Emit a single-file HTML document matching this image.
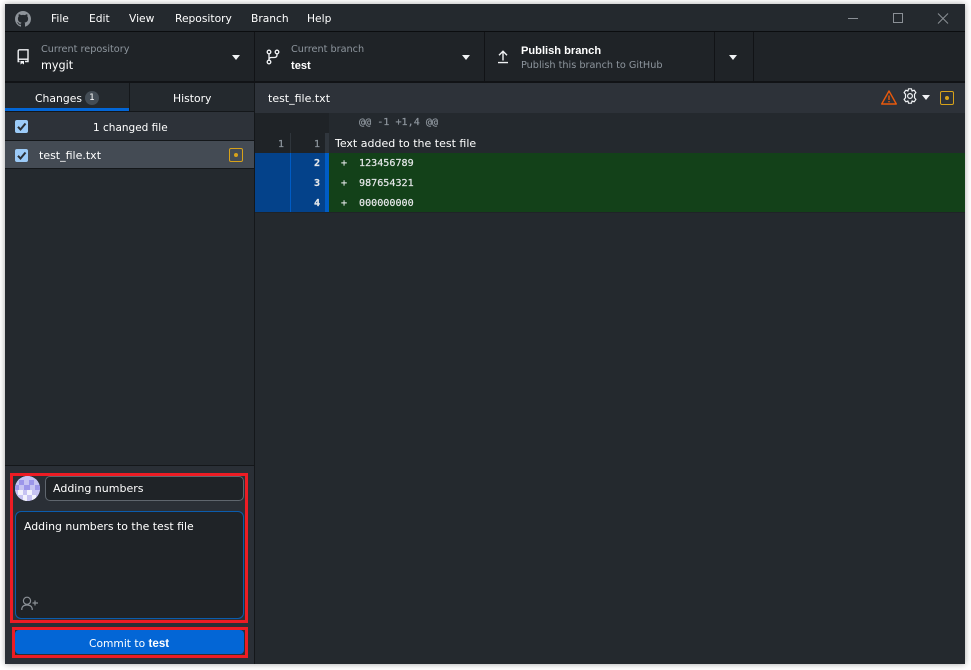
<!DOCTYPE html>
<html><head><meta charset="utf-8"><style>
html,body{margin:0;padding:0;width:971px;height:670px;overflow:hidden;background:#fff}
*{box-sizing:border-box}
#s{position:absolute;left:5px;top:4px;width:960px;height:660px;box-shadow:0 0 6px rgba(0,0,0,.35)}
.b{position:absolute}
.t{position:absolute;white-space:nowrap;font:11px/18px "DejaVu Sans","Liberation Sans",sans-serif;color:#fff}
.n{font-size:10.7px}
.s{font-size:9.7px;color:#8e969e}
.k{font:bold 11.1px/18px "Liberation Sans",sans-serif;color:#fff}
.m{font:10.1px/14px "DejaVu Sans Mono","Liberation Mono",monospace;color:#e6e8ea;-webkit-text-stroke:.2px currentColor}
svg{position:absolute;overflow:visible}
.tri{position:absolute;width:0;height:0;border-left:4.5px solid transparent;border-right:4.5px solid transparent;border-top:5px solid #f0f2f4}
.cb{position:absolute;width:13px;height:13px;background:#9ccbf8;border-radius:2px}
</style></head><body>
<div id="s"></div>
<div class="b" style="left:5px;top:4px;width:960px;height:660px;background:#24292e"></div>
<!-- title bar -->
<div class="b" style="left:5px;top:31px;width:960px;height:1px;background:#0b0d0f"></div>
<svg style="left:15px;top:11px" width="16" height="16" viewBox="0 0 16 16"><path fill="#8d9399" d="M8 0C3.58 0 0 3.58 0 8c0 3.54 2.29 6.53 5.47 7.59.4.07.55-.17.55-.38 0-.19-.01-.82-.01-1.49-2.01.37-2.53-.49-2.69-.94-.09-.23-.48-.94-.82-1.13-.28-.15-.68-.52-.01-.53.63-.01 1.08.58 1.23.82.72 1.21 1.87.87 2.33.66.07-.52.28-.87.51-1.07-1.78-.2-3.64-.89-3.64-3.95 0-.87.31-1.59.82-2.15-.08-.2-.36-1.02.08-2.12 0 0 .67-.21 2.2.82.64-.18 1.32-.27 2-.27.68 0 1.36.09 2 .27 1.53-1.04 2.2-.82 2.2-.82.44 1.1.16 1.92.08 2.12.51.56.82 1.27.82 2.15 0 3.07-1.87 3.75-3.65 3.95.29.25.54.73.54 1.48 0 1.07-.01 1.93-.01 2.2 0 .21.15.46.55.38A8.013 8.013 0 0016 8c0-4.42-3.58-8-8-8z"/></svg>
<span class="t n" style="left:51px;top:10px">File</span>
<span class="t n" style="left:89px;top:10px">Edit</span>
<span class="t n" style="left:129px;top:10px">View</span>
<span class="t n" style="left:175px;top:10px">Repository</span>
<span class="t n" style="left:251px;top:10px">Branch</span>
<span class="t n" style="left:307px;top:10px">Help</span>
<svg style="left:848px;top:13px" width="100" height="12" fill="none" stroke="#8b9096"><path d="M0 5.5H10M45.5 .5H54.5V9.5H45.5ZM90 .5L100 10.5M100 .5L90 10.5"/></svg>
<!-- toolbar -->
<div class="b" style="left:5px;top:32px;width:960px;height:49px;background:#1f2327"></div>
<div class="b" style="left:5px;top:81px;width:960px;height:2px;background:#111316"></div>
<div class="b" style="left:254px;top:32px;width:1px;height:49px;background:#111316"></div>
<div class="b" style="left:484px;top:32px;width:1px;height:49px;background:#111316"></div>
<div class="b" style="left:714px;top:32px;width:1px;height:49px;background:#111316"></div>
<div class="b" style="left:753px;top:32px;width:1px;height:49px;background:#111316"></div>
<svg style="left:17px;top:49px" width="12" height="16" fill="none" stroke="#f0f2f4" stroke-width="1.4"><path d="M2.5 12.5H1.2V2.2Q1.2 .8 2.6 .8H11V12.5H8"/><path d="M1.2 10.2H11"/><path d="M3.5 12V15.5L5.2 14.2L7 15.5V12Z" fill="#f0f2f4" stroke="none"/></svg>
<span class="t s" style="left:41px;top:41px">Current repository</span>
<span class="t" style="left:41px;top:57px;font-size:11.2px">mygit</span>
<div class="tri" style="left:232px;top:55px"></div>
<svg style="left:266px;top:49px" width="13" height="16" fill="none" stroke="#f0f2f4" stroke-width="1.3"><circle cx="3" cy="3" r="1.8"/><circle cx="3" cy="13" r="1.8"/><circle cx="11" cy="3" r="1.8"/><path d="M3 5V11M11 5V6Q11 8.5 8 8.5H5.5Q3 8.5 3 10.5"/></svg>
<span class="t s" style="left:291px;top:41px">Current branch</span>
<span class="t k" style="left:291px;top:57px">test</span>
<div class="tri" style="left:462px;top:55px"></div>
<svg style="left:497px;top:50px" width="12" height="14" fill="none" stroke="#f0f2f4" stroke-width="1.4"><path d="M6 10.5V1.5M2 5.2L6 1.2L10 5.2M1 12.6H11"/></svg>
<span class="t k" style="left:521px;top:42px">Publish branch</span>
<span class="t s" style="left:521px;top:57px">Publish this branch to GitHub</span>
<div class="tri" style="left:729px;top:55px"></div>
<!-- tabs -->
<div class="b" style="left:5px;top:83px;width:249px;height:24px;background:#24292e"></div>
<div class="b" style="left:5px;top:108px;width:124px;height:3px;background:#0366d6"></div>
<div class="b" style="left:129px;top:83px;width:1px;height:28px;background:#14171a"></div>
<div class="b" style="left:5px;top:111px;width:249px;height:1px;background:#14171a"></div>
<span class="t" style="left:35px;top:90px;font-size:10.8px">Changes</span>
<div class="b" style="left:85px;top:91px;width:14px;height:14px;border-radius:7px;background:#444d56;color:#fff;font:9px/14px 'DejaVu Sans',sans-serif;text-align:center">1</div>
<span class="t" style="left:173px;top:90px;font-size:10.8px">History</span>
<!-- sidebar -->
<div class="b" style="left:5px;top:112px;width:249px;height:28px;background:#2d3239"></div>
<div class="b" style="left:5px;top:140px;width:249px;height:1px;background:#14171a"></div>
<div class="b" style="left:5px;top:141px;width:249px;height:27px;background:#444b54"></div>
<div class="b" style="left:5px;top:168px;width:249px;height:1px;background:#14171a"></div>
<div class="cb" style="left:15px;top:120px"></div>
<svg style="left:15px;top:120px" width="13" height="13" fill="none" stroke="#2a2f35" stroke-width="2"><path d="M3 6.8L5.5 9.5L10.5 3.5"/></svg>
<span class="t" style="left:93px;top:119px;font-size:10.5px">1 changed file</span>
<div class="cb" style="left:15px;top:149px"></div>
<svg style="left:15px;top:149px" width="13" height="13" fill="none" stroke="#2a2f35" stroke-width="2"><path d="M3 6.8L5.5 9.5L10.5 3.5"/></svg>
<span class="t" style="left:39px;top:147px">test_file.txt</span>
<div class="b" style="left:229px;top:148px;width:14px;height:14px;border:1.6px solid #d7a21a;border-radius:2px"></div>
<div class="b" style="left:234px;top:153px;width:4px;height:4px;border-radius:2px;background:#d7a21a"></div>
<div class="b" style="left:254px;top:83px;width:1px;height:581px;background:#14171a"></div>
<!-- diff header -->
<div class="b" style="left:255px;top:83px;width:710px;height:30px;background:#2d3239"></div>
<span class="t" style="left:268px;top:90px">test_file.txt</span>
<svg style="left:881px;top:90px" width="16" height="15" fill="none" stroke="#e8590c" stroke-width="1.4"><path d="M8 1L15.3 14H.7Z" stroke-linejoin="round"/><path d="M8 5.5V10M8 11V12.4"/></svg>
<svg style="left:902px;top:88px" width="16" height="16" fill="none" stroke="#f0f2f4" stroke-width="1.2"><path d="M6.5 .8H9.5L10 3L12.2 2.2L13.9 4.6L12.5 6.3L12.5 9.7L13.9 11.4L12.2 13.8L10 13L9.5 15.2H6.5L6 13L3.8 13.8L2.1 11.4L3.5 9.7L3.5 6.3L2.1 4.6L3.8 2.2L6 3Z" stroke-linejoin="round"/><circle cx="8" cy="8" r="2.4"/></svg>
<div class="tri" style="left:922px;top:95px"></div>
<div class="b" style="left:940px;top:91px;width:14px;height:14px;border:1.6px solid #d7a21a;border-radius:2px"></div>
<div class="b" style="left:945px;top:96px;width:4px;height:4px;border-radius:2px;background:#d7a21a"></div>
<!-- diff body -->
<div class="b" style="left:255px;top:113px;width:710px;height:20px;background:#24292e"></div>
<div class="b" style="left:255px;top:113px;width:74px;height:20px;background:#1f2327"></div>
<span class="t m" style="left:359px;top:116px;color:#8e969e">@@ -1 +1,4 @@</span>
<div class="b" style="left:255px;top:133px;width:74px;height:20px;background:#1f2327"></div>
<div class="b" style="left:325px;top:133px;width:4px;height:20px;background:#30363d"></div>
<div class="b" style="left:290px;top:133px;width:1px;height:20px;background:#2f353b"></div>
<span class="t m" style="left:278px;top:138px;color:#8e969e">1</span>
<span class="t m" style="left:314px;top:138px;color:#8e969e">1</span>
<span class="t" style="left:335px;top:135px">Text added to the test file</span>
<div class="b" style="left:255px;top:153px;width:710px;height:59px;background:#134119"></div>
<div class="b" style="left:255px;top:153px;width:70px;height:59px;background:#04428a"></div>
<div class="b" style="left:325px;top:153px;width:4px;height:59px;background:#005cc5"></div>
<div class="b" style="left:290px;top:153px;width:1px;height:59px;background:#005cc5"></div>
<span class="t m" style="left:314px;top:157px;font-weight:bold">2</span>
<span class="t m" style="left:341px;top:157px">+</span>
<span class="t m" style="left:359px;top:157px">123456789</span>
<span class="t m" style="left:314px;top:177px;font-weight:bold">3</span>
<span class="t m" style="left:341px;top:177px">+</span>
<span class="t m" style="left:359px;top:177px">987654321</span>
<span class="t m" style="left:314px;top:197px;font-weight:bold">4</span>
<span class="t m" style="left:341px;top:197px">+</span>
<span class="t m" style="left:359px;top:197px">000000000</span>
<div class="b" style="left:255px;top:212px;width:710px;height:1px;background:#1f2327"></div>
<!-- commit -->
<div class="b" style="left:5px;top:465px;width:249px;height:1px;background:#14171a"></div>
<div class="b" style="left:5px;top:466px;width:249px;height:198px;background:#2a2f36"></div>
<div class="b" style="left:15px;top:476px;width:25px;height:25px;border-radius:50%;overflow:hidden;background:#c9c6f3">
<svg width="25" height="25" style="left:0;top:0"><rect width="25" height="25" fill="#c6c3f2"/><g fill="#9c96ea"><rect x="4" y="4" width="5" height="5"/><rect x="14" y="4" width="5" height="5"/><rect x="9" y="9" width="6" height="5"/><rect x="0" y="9" width="4" height="5"/><rect x="20" y="9" width="5" height="5"/></g><g fill="#f2f2fc"><rect x="3" y="14" width="5" height="5"/><rect x="12" y="14" width="5" height="5"/><rect x="8" y="19" width="4" height="6"/><rect x="17" y="19" width="4" height="6"/></g></svg></div>
<div class="b" style="left:45px;top:476px;width:199px;height:25px;border-radius:5px;background:#1f2327;border:1px solid #5f666e"></div>
<span class="t" style="left:53px;top:480px">Adding numbers</span>
<div class="b" style="left:15px;top:511px;width:229px;height:108px;border-radius:6px;background:#1f2327;border:1px solid #0b5cad"></div>
<span class="t" style="left:24px;top:518px;font-size:10.9px">Adding numbers to the test file</span>
<svg style="left:21px;top:596px" width="18" height="15" fill="none" stroke="#8b9096" stroke-width="1.2"><circle cx="6" cy="4.8" r="3.6"/><path d="M.8 14V12.5Q1.5 9 6 9Q10.5 9 11.2 12.5V14M14 4.5V9.5M11.5 7H17"/></svg>
<div class="b" style="left:10px;top:473px;width:238px;height:150px;border:3px solid #ed1c24"></div>
<div class="b" style="left:15px;top:630px;width:229px;height:24px;border-radius:4px;background:#0366d6"></div>
<div class="b" style="left:12px;top:627px;width:236px;height:31px;border:3px solid #ed1c24"></div>
<span class="t" style="left:89px;top:635px;font-size:10.7px">Commit to <b style="font:bold 11.6px 'Liberation Sans',sans-serif">test</b></span>
</body></html>
